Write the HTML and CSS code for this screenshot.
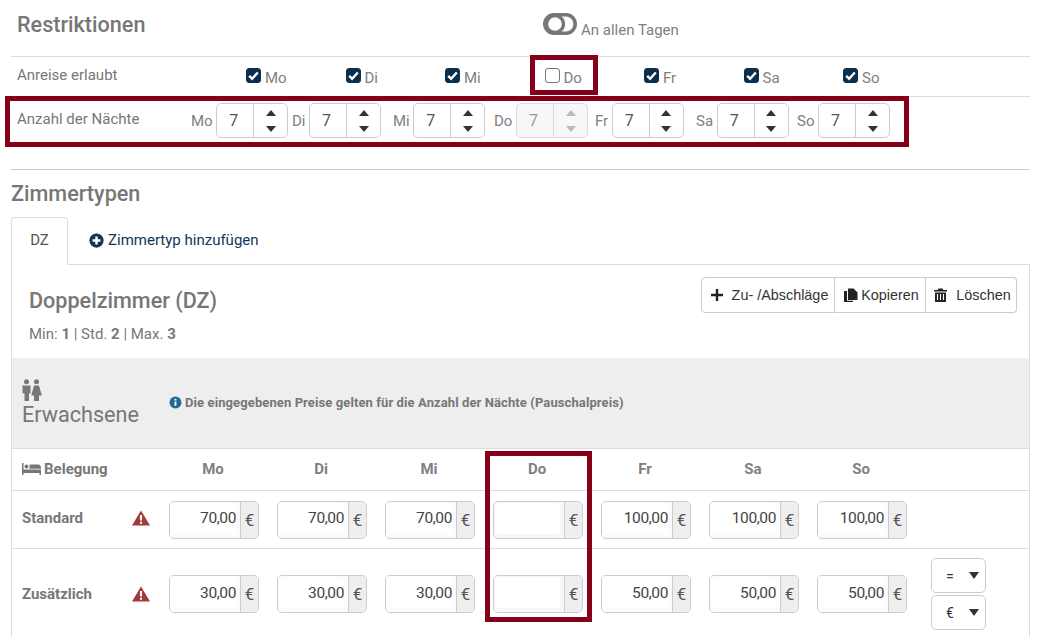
FILE: index.html
```html
<!DOCTYPE html>
<html lang="de">
<head>
<meta charset="utf-8">
<title>Restriktionen</title>
<link rel="stylesheet" href="styles.css">
</head>
<body>
<main class="page">
  <section class="restrictions">
    <div class="r-head">
      <h2 class="r-title">Restriktionen</h2>
      <div class="all-days">
        <svg class="toggle" viewBox="0 0 34 22"><rect x="1.800" y="1.800" width="30.400" height="18.400" rx="9.200" fill="none" stroke="#777" stroke-width="3.600"/><circle cx="12" cy="11" r="8.500" fill="#fff" stroke="#777" stroke-width="3.400"/></svg>
        <span>An allen Tagen</span>
      </div>
    </div>
    <div class="r-arrival">
      <div class="r-label">Anreise erlaubt</div>
      <div class="checks">
        <label class="check"><span class="box on"><svg viewBox="0 0 15 15"><path d="M3.2 7.8l2.9 2.9 5.7-6.2" fill="none" stroke="#fff" stroke-width="2.4"/></svg></span>Mo</label>
        <label class="check"><span class="box on"><svg viewBox="0 0 15 15"><path d="M3.2 7.8l2.9 2.9 5.7-6.2" fill="none" stroke="#fff" stroke-width="2.4"/></svg></span>Di</label>
        <label class="check"><span class="box on"><svg viewBox="0 0 15 15"><path d="M3.2 7.8l2.9 2.9 5.7-6.2" fill="none" stroke="#fff" stroke-width="2.4"/></svg></span>Mi</label>
        <label class="check"><span class="box"></span>Do</label>
        <label class="check"><span class="box on"><svg viewBox="0 0 15 15"><path d="M3.2 7.8l2.9 2.9 5.7-6.2" fill="none" stroke="#fff" stroke-width="2.4"/></svg></span>Fr</label>
        <label class="check"><span class="box on"><svg viewBox="0 0 15 15"><path d="M3.2 7.8l2.9 2.9 5.7-6.2" fill="none" stroke="#fff" stroke-width="2.4"/></svg></span>Sa</label>
        <label class="check"><span class="box on"><svg viewBox="0 0 15 15"><path d="M3.2 7.8l2.9 2.9 5.7-6.2" fill="none" stroke="#fff" stroke-width="2.4"/></svg></span>So</label>
      </div>
    </div>
    <div class="r-nights">
      <div class="r-label">Anzahl der Nächte</div>
      <div class="nights">
        <div class="night"><span>Mo</span><div class="stepper"><input value="7"><div class="arrows"><i class="up"></i><i class="down"></i></div></div></div>
        <div class="night"><span>Di</span><div class="stepper"><input value="7"><div class="arrows"><i class="up"></i><i class="down"></i></div></div></div>
        <div class="night"><span>Mi</span><div class="stepper"><input value="7"><div class="arrows"><i class="up"></i><i class="down"></i></div></div></div>
        <div class="night"><span>Do</span><div class="stepper off"><input value="7" disabled><div class="arrows"><i class="up"></i><i class="down"></i></div></div></div>
        <div class="night"><span>Fr</span><div class="stepper"><input value="7"><div class="arrows"><i class="up"></i><i class="down"></i></div></div></div>
        <div class="night"><span>Sa</span><div class="stepper"><input value="7"><div class="arrows"><i class="up"></i><i class="down"></i></div></div></div>
        <div class="night"><span>So</span><div class="stepper"><input value="7"><div class="arrows"><i class="up"></i><i class="down"></i></div></div></div>
      </div>
    </div>
  </section>

  <section class="rooms">
    <h2 class="rooms-title">Zimmertypen</h2>
    <nav class="tabs">
      <a class="tab active">DZ</a>
      <a class="tab-add"><svg class="plus" viewBox="0 0 16 16"><circle cx="8" cy="8" r="7.600" fill="#0f3557"/><path d="M8 3.800v8.400M3.800 8h8.400" stroke="#fff" stroke-width="2.600"/></svg>Zimmertyp hinzufügen</a>
    </nav>
    <div class="panel">
      <div class="panel-head">
        <div>
          <h3 class="room-name">Doppelzimmer (DZ)</h3>
          <p class="room-meta">Min: <b>1</b> | Std. <b>2</b> | Max. <b>3</b></p>
        </div>
        <div class="btn-group">
          <button class="btn b1"><svg class="ic-plus" viewBox="0 0 12 12"><path d="M6 0v12M0 6h12" stroke="#222" stroke-width="2.400"/></svg>Zu- /Abschläge</button>
          <button class="btn b2"><svg class="ic-copy" viewBox="0 0 14 14"><path d="M0 3h3v9.800h6V14H0z" fill="#222"/><path d="M4 0.500H9.500L13.500 4.500V12H4z" fill="#222"/></svg>Kopieren</button>
          <button class="btn b3"><svg class="ic-trash" viewBox="0 0 13 14"><path d="M4.500 0.500h4l1 1.500H13v1.500H0V2h3.500zM1 4.500h11V14H1z" fill="#222"/><path d="M3.500 6v6M6.500 6v6M9.500 6v6" stroke="#fff" stroke-width="1.100"/></svg>Löschen</button>
        </div>
      </div>
      <div class="guest-band">
        <div class="guest-title">
          <svg class="people" viewBox="0 0 20 22"><circle cx="4.500" cy="2.800" r="2.500" fill="#777"/><circle cx="14.500" cy="2.800" r="2.500" fill="#777"/><path d="M0.500 6.500h8v8H7V22H2.500v-7.500h-2z" fill="#777"/><path d="M12 6.500h5l2.800 10H17V22h-5v-5.500H9.300z" fill="#777"/></svg>
          <span>Erwachsene</span>
        </div>
        <div class="notice"><svg class="info" viewBox="0 0 14 14"><circle cx="7" cy="7" r="6.400" fill="#1f6a8f"/><path d="M7 6v4.500M7 3v1.800" stroke="#fff" stroke-width="2"/></svg>Die eingegebenen Preise gelten für die Anzahl der Nächte (Pauschalpreis)</div>
      </div>
      <div class="price-row head">
        <div class="cell-label"><svg class="bed" viewBox="0 0 19 12"><path d="M0 0h1.500v6.500H19V12h-1.500v-2h-16v2H0z" fill="#777"/><circle cx="4.500" cy="3.500" r="2" fill="#777"/><path d="M7.500 1.500h8.500c2 0 3 1.500 3 4v.3H7.500z" fill="#777"/></svg>Belegung</div>
        <div class="day">Mo</div><div class="day">Di</div><div class="day">Mi</div><div class="day">Do</div><div class="day">Fr</div><div class="day">Sa</div><div class="day">So</div>
      </div>
      <div class="price-row std">
        <div class="cell-label"><span>Standard</span><svg class="warn" viewBox="0 0 18 16"><path d="M9 0.500L18 15.500H0z" fill="#a33a3a"/><path d="M9 5v5.500M9 11.800v2" stroke="#fff" stroke-width="2.100"/></svg></div>
        <div class="price"><div class="field"><input value="70,00"></div><span class="addon">€</span></div>
        <div class="price"><div class="field"><input value="70,00"></div><span class="addon">€</span></div>
        <div class="price"><div class="field"><input value="70,00"></div><span class="addon">€</span></div>
        <div class="price empty"><div class="field"><input value=""></div><span class="addon">€</span></div>
        <div class="price"><div class="field"><input value="100,00"></div><span class="addon">€</span></div>
        <div class="price"><div class="field"><input value="100,00"></div><span class="addon">€</span></div>
        <div class="price"><div class="field"><input value="100,00"></div><span class="addon">€</span></div>
      </div>
      <div class="price-row extra">
        <div class="cell-label"><span>Zusätzlich</span><svg class="warn" viewBox="0 0 18 16"><path d="M9 0.500L18 15.500H0z" fill="#a33a3a"/><path d="M9 5v5.500M9 11.800v2" stroke="#fff" stroke-width="2.100"/></svg></div>
        <div class="price"><div class="field"><input value="30,00"></div><span class="addon">€</span></div>
        <div class="price"><div class="field"><input value="30,00"></div><span class="addon">€</span></div>
        <div class="price"><div class="field"><input value="30,00"></div><span class="addon">€</span></div>
        <div class="price empty"><div class="field"><input value=""></div><span class="addon">€</span></div>
        <div class="price"><div class="field"><input value="50,00"></div><span class="addon">€</span></div>
        <div class="price"><div class="field"><input value="50,00"></div><span class="addon">€</span></div>
        <div class="price"><div class="field"><input value="50,00"></div><span class="addon">€</span></div>
        <div class="selects">
          <div class="sel"><span>=</span><i></i></div>
          <div class="sel"><span>€</span><i></i></div>
        </div>
      </div>
    </div>
  </section>

  <div class="frame f-do-check"></div>
  <div class="frame f-nights"></div>
  <div class="frame f-do-col"></div>
</main>
</body>
</html>
```
FILE: styles.css
```css
* { box-sizing: border-box; }
html, body { margin: 0; height: 637px; overflow: hidden; background: #fff; }
body { font-family: Roboto, "Liberation Sans", sans-serif; font-size: 15px; color: #777; }
h2, h3, p { margin: 0; }
input { font-family: inherit; outline: none; }

.page { position: relative; width: 1041px; height: 637px; padding: 0 11px; }

/* Restrictions */
.restrictions { height: 170px; border-bottom: 1px solid #ccc; }
.r-head { display: flex; height: 57px; border-bottom: 1px solid #ddd; padding-left: 6px; }
.r-title { width: 526px; padding-top: 13px; font-size: 21.6px; line-height: 24px; font-weight: 500; color: #777; }
.all-days { display: flex; align-items: flex-start; padding-top: 13px; }
.all-days span { margin: 7px 0 0 4px; line-height: 20px; color: #808080; }
.toggle { width: 34px; height: 22px; display: block; }

.r-arrival { display: flex; height: 40px; border-bottom: 1px solid #ddd; padding-left: 6px; }
.r-label { line-height: 20px; color: #777; }
.r-arrival .r-label { width: 229px; padding-top: 8px; }
.checks { display: flex; }
.check { width: 99.5px; display: flex; align-items: flex-start; padding-top: 11px; line-height: 20px; color: #808080; }
.box { width: 15px; height: 15px; margin-right: 4px; border: 1px solid #777; border-radius: 3px; background: #fff; flex: none; }
.box.on { background: #0b2f4e; border-color: #0b2f4e; }
.box svg { display: block; width: 15px; height: 15px; margin: -1px; }

.r-nights { display: flex; padding: 6px 0 0 6px; }
.r-nights .r-label { width: 174px; padding-top: 6px; }
.nights { display: flex; }
.night { width: 101px; display: flex; align-items: center; }
.night span { margin-right: 3.6px; line-height: 20px; color: #808080; }
.stepper { width: 72px; height: 35px; display: flex; border: 1px solid #ccc; border-radius: 5px; background: #fff; overflow: hidden; flex: none; }
.stepper input { width: 37px; border: 0; border-right: 1px solid #ccc; padding: 0 0 0 12px; font-size: 16px; color: #555; background: transparent; }
.arrows { flex: 1; display: flex; flex-direction: column; align-items: center; justify-content: space-between; padding: 6px 0 5px; }
.arrows i { display: block; width: 0; height: 0; border-left: 5px solid transparent; border-right: 5px solid transparent; }
.arrows .up { border-bottom: 6px solid #333; }
.arrows .down { border-top: 6px solid #333; }
.stepper.off { background: #f7f7f7; border-color: #ddd; }
.stepper.off input { color: #999; border-right-color: #ddd; }
.stepper.off .up { border-bottom-color: #bbb; }
.stepper.off .down { border-top-color: #bbb; }

/* Rooms */
.rooms-title { padding-top: 12px; font-size: 21.6px; line-height: 24px; font-weight: 500; color: #777; }
.tabs { display: flex; height: 48px; margin-top: 11px; border-bottom: 1px solid #ddd; width: 1019px; }
.tab { width: 57px; height: 48px; border: 1px solid #ddd; border-bottom-color: #fff; border-radius: 4px 4px 0 0; background: #fff; text-align: center; line-height: 44px; color: #555; }
.tab-add { display: flex; align-items: center; height: 46px; margin-left: 21px; color: #0f3557; line-height: 20px; }
.plus { width: 15px; height: 15px; margin-right: 4px; }

.panel { width: 1019px; border: 1px solid #ddd; border-width: 0 1px; }
.panel-head { height: 93px; display: flex; justify-content: space-between; padding: 12px 12px 0 17px; }
.room-name { padding-top: 11px; font-size: 21.6px; line-height: 26px; font-weight: 500; color: #777; }
.room-meta { margin-top: 10px; line-height: 20px; color: #777; }
.room-meta b { font-weight: 700; }

.btn-group { display: flex; height: 36px; }
.btn { height: 36px; display: flex; align-items: center; justify-content: center; background: #fff; border: 1px solid #ccc; border-left-width: 0; padding: 0 0 0 3px; font-family: "Liberation Sans", Arial, sans-serif; font-size: 14.4px; color: #333; }
.b1 { width: 134px; border-left-width: 1px; border-radius: 4px 0 0 4px; }
.b2 { width: 91px; }
.b3 { width: 91px; border-radius: 0 4px 4px 0; }
.ic-plus { width: 12px; height: 12px; margin-right: 9px; }
.ic-copy { width: 14px; height: 14px; margin-right: 3px; }
.ic-trash { width: 13px; height: 14px; margin-right: 9px; }

.guest-band { height: 91px; background: #eee; border-bottom: 1px solid #ddd; display: flex; padding: 21px 0 0 10px; }
.guest-title { width: 147px; }
.people { display: block; width: 20px; height: 22px; }
.guest-title span { display: block; margin-top: 1px; font-size: 21.6px; line-height: 26px; color: #777; }
.notice { display: flex; align-items: center; height: 46px; font-size: 13px; font-weight: 700; color: #777; letter-spacing: 0.100px; }
.info { width: 13px; height: 13px; margin-right: 3px; }

.price-row { display: grid; grid-template-columns: 157px repeat(7, 108px) 1fr; align-items: center; border-bottom: 1px solid #ddd; }
.price-row.head { height: 42px; padding-bottom: 2px; font-weight: 700; }
.price-row.std { height: 58px; }
.price-row.std .cell-label { margin-top: -3px; }
.price-row.extra { height: 90px; border-bottom: 0; }
.cell-label { display: flex; align-items: center; padding-left: 10px; font-weight: 700; color: #777; }
.cell-label span { width: 110px; }
.bed { width: 19px; height: 12px; margin-right: 3px; }
.warn { width: 18px; height: 16px; }
.day { width: 88px; text-align: center; font-weight: 700; color: #808080; }

.price { display: flex; width: 90px; height: 38px; border: 1px solid #ccc; border-radius: 5px; overflow: hidden; }
.field { flex: 1; min-width: 0; background: #fbfbfb; padding: 1px 4px 4px 1px; }
.field input { width: 100%; height: 100%; border: 0; border-radius: 4px; background: #fff; padding: 0; text-align: right; font-size: 15.5px; letter-spacing: -0.4px; color: #444; }
.addon { width: 18px; flex: none; display: flex; align-items: center; justify-content: center; background: #eee; border-left: 1px solid #ccc; font-size: 17px; color: #555; }
.price.empty .field { background: #f6f6f6; }

.selects { display: flex; flex-direction: column; gap: 2px; width: 55px; margin-left: 6px; }
.sel { height: 35px; display: flex; align-items: center; justify-content: space-between; border: 1px solid #ccc; border-radius: 5px; padding: 0 6px 0 14px; color: #333; background: #fff; font-size: 14px; }
.sel i { width: 0; height: 0; border-left: 5px solid transparent; border-right: 5px solid transparent; border-top: 7px solid #333; }

/* Annotation frames drawn over the page */
.frame { position: absolute; border: 5px solid #860019; pointer-events: none; }
.f-do-check { left: 530px; top: 55px; width: 68px; height: 40px; }
.f-nights { left: 5px; top: 96px; width: 904px; height: 51px; }
.f-do-col { left: 485px; top: 451px; width: 107px; height: 171px; }
```
